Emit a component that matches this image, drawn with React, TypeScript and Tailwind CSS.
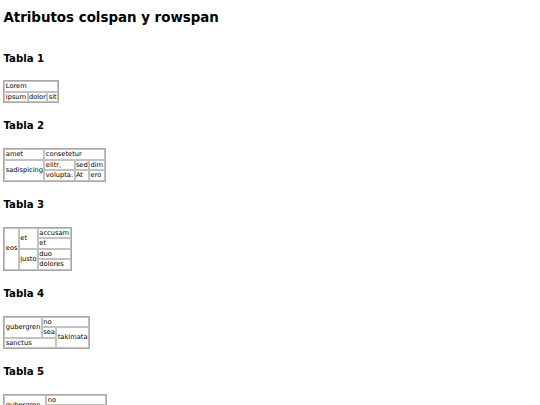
import React from 'react';

const cell = 'border border-[#c2c2c2] px-[0.4px] py-0 text-left align-middle font-normal';

const Heading = ({ children }: { children: React.ReactNode }) => (
  <h2 className="mt-[17px] mb-[16px] text-[10.2px] font-bold leading-[1.164]">{children}</h2>
);

const Table = ({ children }: { children: React.ReactNode }) => (
  <table className="border-separate border-spacing-0 border border-[#a8a8a8] text-[6.7px] leading-[8.5px]">
    <tbody>{children}</tbody>
  </table>
);

export default function App() {
  return (
    <div className="min-h-[405px] bg-white px-[3.4px] pt-[10px] pb-4 font-['DejaVu_Sans',sans-serif] text-black">
      <h1 className="mb-[27px] text-[13.4px] font-bold leading-[1.164]">Atributos colspan y rowspan</h1>

      {/* Tabla 1 */}
      <Heading>Tabla 1</Heading>
      <Table>
        <tr>
          <td className={cell} colSpan={3}>Lorem</td>
        </tr>
        <tr>
          <td className={cell}>ipsum</td>
          <td className={cell}>dolor</td>
          <td className={cell}>sit</td>
        </tr>
      </Table>

      {/* Tabla 2 */}
      <Heading>Tabla 2</Heading>
      <Table>
        <tr>
          <td className={cell}>amet</td>
          <td className={cell} colSpan={3}>consetetur</td>
        </tr>
        <tr>
          <td className={cell} rowSpan={2}>sadispicing</td>
          <td className={cell}>elitr,</td>
          <td className={cell}>sed</td>
          <td className={cell}>dim</td>
        </tr>
        <tr>
          <td className={cell}>volupta.</td>
          <td className={cell}>At</td>
          <td className={cell}>ero</td>
        </tr>
      </Table>

      {/* Tabla 3 */}
      <Heading>Tabla 3</Heading>
      <Table>
        <tr>
          <td className={cell} rowSpan={4}>eos</td>
          <td className={cell} rowSpan={2}>et</td>
          <td className={cell}>accusam</td>
        </tr>
        <tr>
          <td className={cell}>et</td>
        </tr>
        <tr>
          <td className={cell} rowSpan={2}>justo</td>
          <td className={cell}>duo</td>
        </tr>
        <tr>
          <td className={cell}>dolores</td>
        </tr>
      </Table>

      {/* Tabla 4 */}
      <Heading>Tabla 4</Heading>
      <Table>
        <tr>
          <td className={cell} rowSpan={2}>gubergren</td>
          <td className={cell} colSpan={2}>no</td>
        </tr>
        <tr>
          <td className={cell}>sea</td>
          <td className={cell} rowSpan={2}>takimata</td>
        </tr>
        <tr>
          <td className={cell} colSpan={2}>sanctus</td>
        </tr>
      </Table>

      {/* Tabla 5 */}
      <Heading>Tabla 5</Heading>
      <Table>
        <tr>
          <td className={cell + ' w-[42px]'} rowSpan={2}>gubergren</td>
          <td className={cell} colSpan={2}>no</td>
        </tr>
        <tr>
          <td className={cell}>sea</td>
          <td className={cell} rowSpan={2}>takimata est</td>
        </tr>
        <tr>
          <td className={cell} colSpan={2}>sanctus</td>
        </tr>
      </Table>
    </div>
  );
}
